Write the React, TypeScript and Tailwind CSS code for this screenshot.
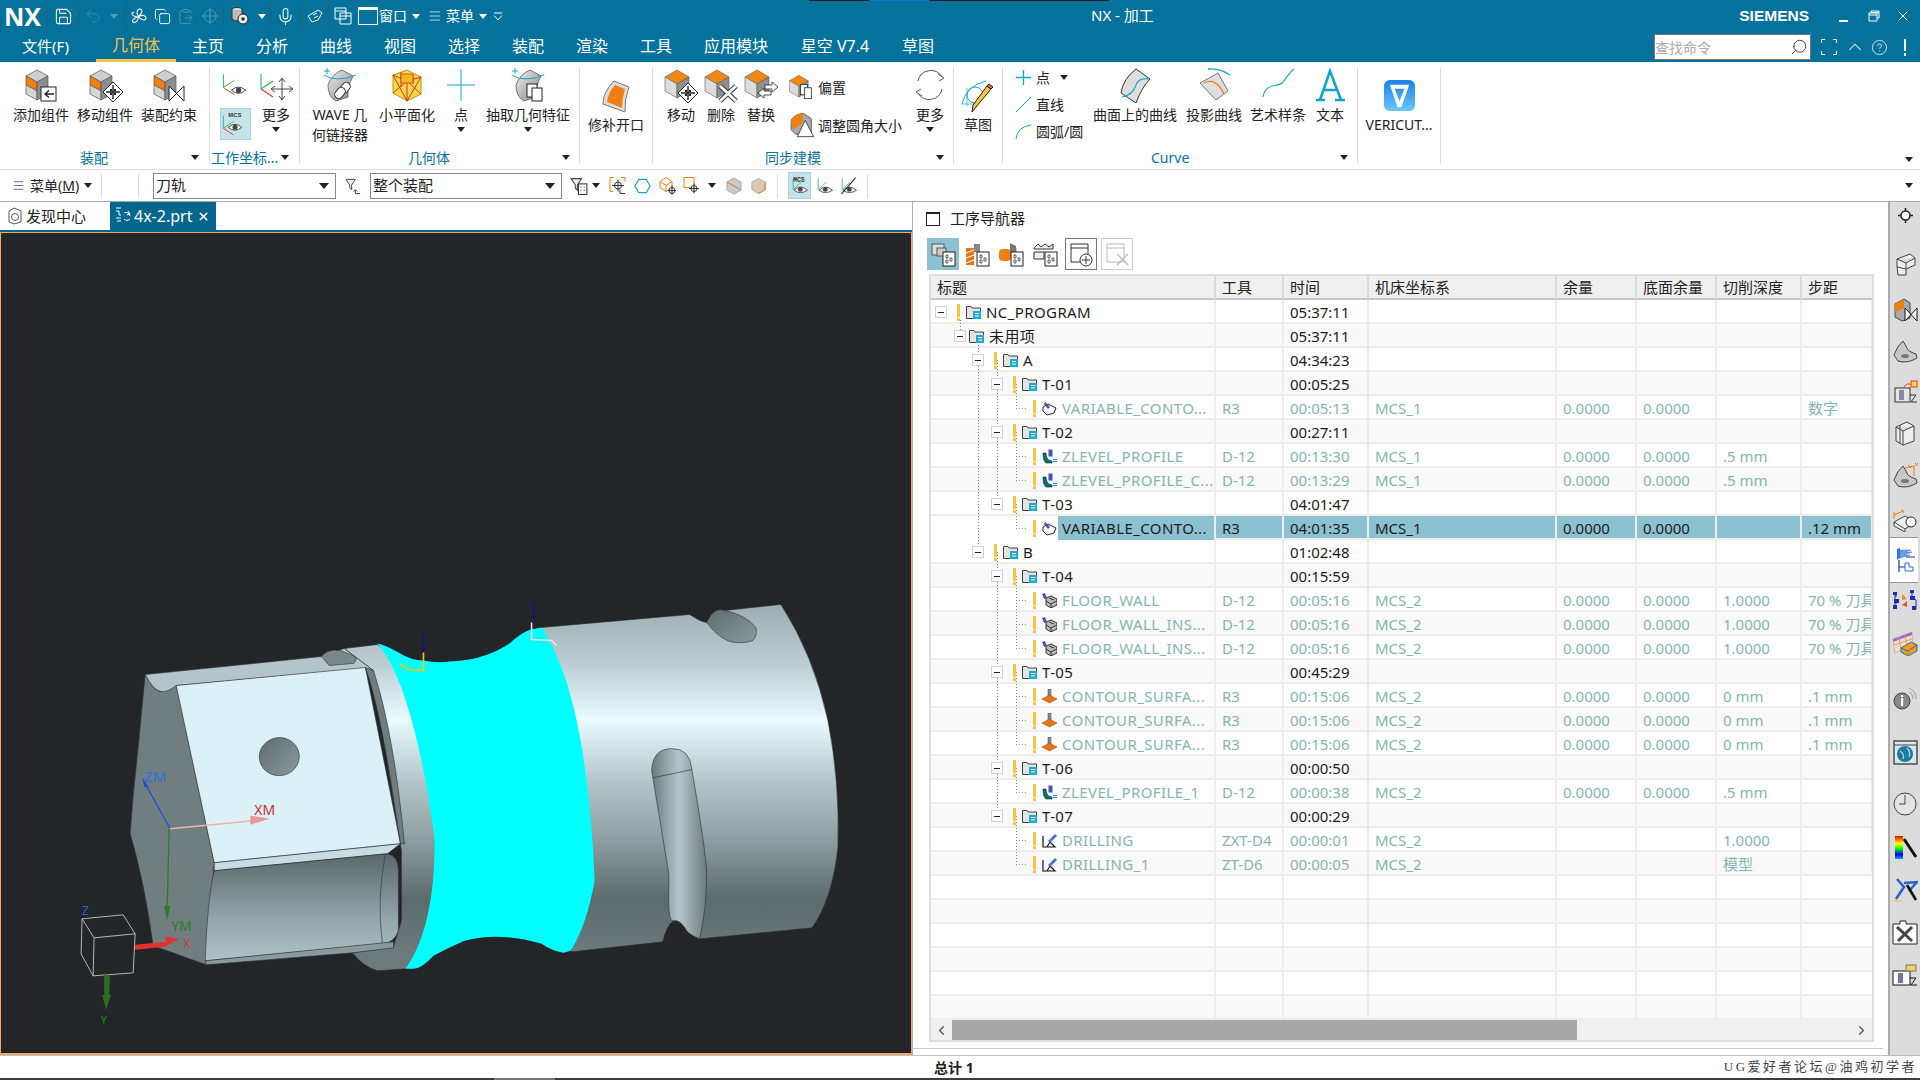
import React from "react";
import { Save, Undo2, Copy, ClipboardPaste, Mic, Menu, Search, ChevronUp, CircleHelp, ChevronLeft, ChevronRight, X } from "lucide-react";

const Caret = ({ c = "" }: { c?: string }) => (
  <span className={"inline-block w-0 h-0 border-x-[4px] border-t-[5px] border-x-transparent border-t-[#222] shrink-0 " + c} />
);
const WCaret = ({ c = "" }: { c?: string }) => (
  <span className={"inline-block w-0 h-0 border-x-[4px] border-t-[5px] border-x-transparent border-t-white shrink-0 " + c} />
);
const VSep = () => <span className="w-px h-[26px] bg-[#2b5f78] shrink-0" />;

const Ic = ({ c = "w-[36px] h-[36px]", children, vb = "0 0 36 36" }: { c?: string; children: React.ReactNode; vb?: string }) => (
  <svg viewBox={vb} className={c + " shrink-0"} fill="none">{children}</svg>
);

/* ---------- ribbon icon parts ---------- */
const TallBox = () => (
  <g stroke="#555" strokeWidth="0.7">
    <path d="M3 9 L14 3 L25 9 L14 15Z" fill="#cfcfcf" />
    <path d="M3 9 L14 15 V24 L3 18Z" fill="#f0810f" />
    <path d="M3 18 L14 24 V33 L3 27Z" fill="#d6d6d6" />
    <path d="M14 15 L25 9 V27 L14 33Z" fill="#8d8d8d" />
  </g>
);
const OrangeBox = ({ s = 1 }: { s?: number }) => (
  <g transform={`scale(${s})`} stroke="#555" strokeWidth="0.6">
    <path d="M2 10 L14 3 L26 10 L14 17Z" fill="#f28a12" />
    <path d="M2 10 L14 17 V31 L2 24Z" fill="#dcdcdc" />
    <path d="M14 17 L26 10 V24 L14 31Z" fill="#8f8f8f" />
  </g>
);
const Cross4 = ({ x = 24, y = 24, r = 10 }: { x?: number; y?: number; r?: number }) => (
  <g transform={`translate(${x} ${y})`}>
    <path d={`M0 ${-r} L${r} 0 L0 ${r} L${-r} 0Z`} fill="#fff" stroke="#222" strokeWidth="1" />
    <path d={`M0 ${-r + 3} V${r - 3} M${-r + 3} 0 H${r - 3}`} stroke="#222" strokeWidth="1.4" />
    <path d="M-3 -3h2v2h-2zM1 -3h2v2h-2zM-3 1h2v2h-2zM1 1h2v2h-2z" fill="#222" />
  </g>
);
const EyeG = ({ x, y }: { x: number; y: number }) => (
  <g transform={`translate(${x} ${y})`}>
    <path d="M-8 0 Q0 -7 8 0 Q0 7 -8 0Z" fill="#fff" stroke="#333" strokeWidth="1" />
    <circle r="3" fill="#444" />
  </g>
);
const AxisG = ({ x, y }: { x: number; y: number }) => (
  <g transform={`translate(${x} ${y})`} strokeWidth="1.1">
    <path d="M0 0 V-15" stroke="#17a9c9" />
    <path d="M0 0 L12 -8" stroke="#38b838" />
    <path d="M0 0 L12 8" stroke="#e33" />
  </g>
);

const IAdd = () => <Ic><TallBox /><rect x="18" y="20" width="15" height="14" fill="#fff" stroke="#222" /><path d="M31 27 H23 M26 23.5 L22 27 L26 30.5" stroke="#222" strokeWidth="1.3" /></Ic>;
const IMoveC = () => <Ic><TallBox /><Cross4 x={26} y={25} /></Ic>;
const IConstr = () => <Ic><TallBox /><path d="M18 19 V34 L33 19 V34Z" fill="#fff" stroke="#222" /></Ic>;
const IMoveAxis = () => <Ic><AxisG x={3} y={22} /><path d="M24 12 V32 M14 22 H34 M21 15 L24 11 L27 15 M21 29 L24 33 L27 29 M17 19 L13 22 L17 25 M31 19 L35 22 L31 25" stroke="#333" strokeWidth="0.9" /></Ic>;
const IWave = () => (
  <Ic>
    <path d="M6 18 Q10 7 20 3 L31 9 Q25 20 26 30 L14 34 Q6 30 6 18Z" fill="url(#gs)" stroke="#444" strokeWidth="0.7" />
    <path d="M2 8 Q14 16 34 8" stroke="#19a6c7" strokeWidth="1" />
    <path d="M2 4 H8 M5 1 V7" stroke="#19a6c7" />
    <rect x="19" y="15" width="8" height="12" rx="4" fill="#fff" stroke="#333" transform="rotate(40 23 21)" />
    <rect x="14" y="20" width="8" height="12" rx="4" fill="#fff" stroke="#333" transform="rotate(40 18 26)" />
  </Ic>
);
const IFacet = () => (
  <Ic>
    <path d="M4 8 L18 3 L32 10 V27 L18 34 L4 26Z" fill="#f7d74a" stroke="#b99b10" />
    <path d="M4 8 L18 14 L32 10 M18 14 V34 M4 8 L18 34 M18 14 L4 26 M18 14 L32 27 M18 34 L32 10 M12 5 L12 20 M24 7 V17" stroke="#d51f1f" strokeWidth="0.9" />
    <path d="M12 7 H24 V16 H12Z" fill="#f2b91f" stroke="#c03030" strokeWidth="0.7" />
  </Ic>
);
const IPlus = () => <Ic><path d="M18 2 V34 M4 18 H32" stroke="#18a5c5" strokeWidth="1" /></Ic>;
const IExtract = () => (
  <Ic>
    <path d="M6 18 Q10 7 20 3 L31 9 Q25 20 26 30 L14 34 Q6 30 6 18Z" fill="url(#gs)" stroke="#444" strokeWidth="0.7" />
    <path d="M2 8 Q14 16 34 8" stroke="#19a6c7" strokeWidth="1" />
    <path d="M2 4 H8 M5 1 V7" stroke="#19a6c7" />
    <rect x="17" y="17" width="10" height="13" fill="#fff" stroke="#222" />
    <rect x="22" y="21" width="10" height="13" fill="#fff" stroke="#222" />
  </Ic>
);
const IPatch = () => <Ic><path d="M5 26 Q5 14 16 3 L31 9 Q26 22 27 34Z" fill="#ddd" stroke="#777" /><path d="M9 24 Q10 15 17 7 L27 11 Q24 21 24 30Z" fill="#ef7f10" /></Ic>;
const ISMove = () => <Ic><OrangeBox /><Cross4 x={25} y={26} /></Ic>;
const ISDel = () => <Ic><OrangeBox /><path d="M17 19 L33 34 M33 19 L17 34" stroke="#333" strokeWidth="5" /><path d="M17 19 L33 34 M33 19 L17 34" stroke="#fff" strokeWidth="3" /></Ic>;
const ISRep = () => <Ic><OrangeBox /><path d="M15 26 L21 21 V24 H28 V28 H21 V31Z" fill="#fff" stroke="#222" strokeWidth="0.8" /><path d="M35 20 L29 15 V18 H22 V22 H29 V25Z" fill="#fff" stroke="#222" strokeWidth="0.8" /></Ic>;
const IOffset = () => <Ic c="w-[28px] h-[28px]"><OrangeBox /><rect x="16" y="15" width="9" height="13" fill="#fff" stroke="#222" /><rect x="21" y="19" width="9" height="14" fill="#fff" stroke="#222" /></Ic>;
const IFillet = () => <Ic c="w-[28px] h-[28px]"><path d="M4 12 Q8 4 20 3 L30 10 V28 L10 30 L4 24Z" fill="#aaa" stroke="#444" /><path d="M4 12 Q8 4 20 3 L18 16 L6 24Z" fill="#ef7f10" /><path d="M22 12 L33 33 H12Z" fill="#fff" stroke="#222" /></Ic>;
const IMore = () => <Ic><path d="M6 14 A13 13 0 0 1 30 10 M30 22 A13 13 0 0 1 6 26" stroke="#555" strokeWidth="1" /><path d="M26 7 L32 11 L27 14 M10 29 L4 25 L9 22" stroke="#555" /></Ic>;
const ISketch = () => (
  <Ic>
    <path d="M2 26 Q6 8 26 3" stroke="#19a6c7" strokeWidth="1" />
    <path d="M2 26 H16 M7 10 V28" stroke="#19a6c7" strokeWidth="0.7" />
    <circle cx="15" cy="17" r="8" stroke="#19a6c7" />
    <path d="M31 11 L16 29 L12 34 L13 27 L27 8Z" fill="#f5cb3b" stroke="#222" />
    <path d="M27 8 L31 11 L33 9 L29 6Z" fill="#e86a5f" stroke="#222" />
  </Ic>
);
const ISurfCurve = () => <Ic><path d="M4 26 Q6 12 19 2 L33 12 Q25 20 19 36Z" fill="#dedede" stroke="#333" /><path d="M5 30 Q16 28 19 18 Q22 10 32 12" stroke="#19a6c7" strokeWidth="1.1" /></Ic>;
const IProj = () => <Ic><path d="M12 2 Q24 1 34 8" stroke="#19a6c7" strokeWidth="1.3" /><path d="M4 16 L22 6 L32 24 L20 33Z" fill="#dedede" stroke="#777" /><path d="M8 16 Q20 10 28 27" stroke="#ef7f10" strokeWidth="1.3" /></Ic>;
const ISpline = () => <Ic><path d="M3 30 C5 16 18 20 22 16 C28 10 28 6 34 2" stroke="#19a6c7" strokeWidth="1.1" /></Ic>;
const IA = () => <Ic><path d="M4 33 H13 M23 33 H33 M8 33 L18 4 L29 33 M11 23 H25" stroke="#0ea6c8" strokeWidth="2.6" /></Ic>;
const IVeri = () => (
  <svg viewBox="0 0 34 34" className="w-[33px] h-[33px] shrink-0">
    <defs><linearGradient id="vg" x1="0" y1="0" x2="0" y2="1"><stop offset="0" stopColor="#1d7fe4" /><stop offset="1" stopColor="#6cc6fa" /></linearGradient></defs>
    <rect x="1" y="1" width="32" height="32" rx="6" fill="url(#vg)" />
    <path d="M7 6 H27 L19 29 H15Z M12 10 L17 23 L22 10Z" fill="#f0faff" fillRule="evenodd" />
  </svg>
);

/* ---------- ribbon scaffolding ---------- */
const Btn = ({ w, label, icon, low, caret }: { w: string; label: React.ReactNode; icon: React.ReactNode; low?: boolean; caret?: boolean }) => (
  <div className={w + " flex flex-col items-center shrink-0 text-[14px] leading-[20px] text-center text-[#222] " + (low ? "pt-[9px]" : "")}>
    <div className={"flex justify-center " + (low ? "h-[39px] items-center" : "h-[38px] items-start")}>{icon}</div>
    <div className="whitespace-nowrap">{label}</div>
    {caret && <Caret c="mt-[2px]" />}
  </div>
);
const Group = ({ w, foot, children }: { w: string; foot?: React.ReactNode; children: React.ReactNode }) => (
  <div className={w + " my-[5px] flex flex-col border-r border-[#dcdcdc] shrink-0"}>
    <div className="h-[83px] flex">{children}</div>
    <div className="h-[15px]">{foot}</div>
  </div>
);
const Foot = ({ c, t }: { c: string; t: string }) => (
  <div className={"flex items-center justify-between h-[20px] -mt-[2px] text-[14px] text-[#05729c] " + c}>
    <span className="whitespace-nowrap">{t}</span>
    <Caret />
  </div>
);

const Ribbon = () => (
  <div className="h-[108px] flex border-b border-[#dedede] bg-white shrink-0">
    <Group w="w-[210px]" foot={<Foot c="pl-[80px] pr-[10px]" t="装配" />}>
      <div className="flex pl-[9px]">
        <Btn w="w-[64px]" label="添加组件" icon={<IAdd />} />
        <Btn w="w-[64px]" label="移动组件" icon={<IMoveC />} />
        <Btn w="w-[64px]" label="装配约束" icon={<IConstr />} />
      </div>
    </Group>
    <Group w="w-[90px]" foot={<Foot c="pl-[1px] pr-[10px]" t="工作坐标..." />}>
      <div className="w-[40px] ml-[5px] flex flex-col items-center pt-[1px] gap-[8px]">
        <Ic c="w-[32px] h-[32px]"><AxisG x={5} y={22} /><EyeG x={22} y={25} /></Ic>
        <div className="w-[31px] h-[32px] bg-[#c5e3ea] border border-[#a9d3de] flex items-center justify-center">
          <Ic c="w-[30px] h-[30px]"><AxisG x={4} y={23} /><EyeG x={18} y={22} /><text x="10" y="10" fontSize="7" fontWeight="700" fill="#333" fontFamily="Liberation Sans">MCS</text></Ic>
        </div>
      </div>
      <Btn w="w-[42px]" label="更多" icon={<IMoveAxis />} caret />
    </Group>
    <Group w="w-[280px]" foot={<Foot c="pl-[108px] pr-[9px]" t="几何体" />}>
      <div className="flex pl-[4px]">
        <Btn w="w-[72px]" label={<>WAVE 几<br />何链接器</>} icon={<IWave />} />
        <Btn w="w-[62px]" label="小平面化" icon={<IFacet />} />
        <Btn w="w-[46px]" label="点" icon={<IPlus />} caret />
        <Btn w="w-[88px]" label="抽取几何特征" icon={<IExtract />} caret />
      </div>
    </Group>
    <Group w="w-[73px]">
      <div className="w-full flex justify-center"><Btn w="w-[72px]" low label="修补开口" icon={<IPatch />} /></div>
    </Group>
    <Group w="w-[301px]" foot={<Foot c="pl-[112px] pr-[9px]" t="同步建模" />}>
      <div className="flex pl-[8px]">
        <Btn w="w-[40px]" label="移动" icon={<ISMove />} />
        <Btn w="w-[40px]" label="删除" icon={<ISDel />} />
        <Btn w="w-[40px]" label="替换" icon={<ISRep />} />
        <div className="ml-[7px] w-[122px] flex flex-col pt-[1px] text-[14px] text-[#222]">
          <div className="h-[38px] flex items-center gap-[2px]"><IOffset />偏置</div>
          <div className="h-[38px] flex items-center gap-[2px] whitespace-nowrap"><IFillet />调整圆角大小</div>
        </div>
        <Btn w="w-[40px]" label="更多" icon={<IMore />} caret />
      </div>
    </Group>
    <Group w="w-[49px]">
      <div className="w-full flex justify-center"><Btn w="w-[48px]" low label="草图" icon={<ISketch />} /></div>
    </Group>
    <Group w="w-[355px]" foot={<Foot c="pl-[148px] pr-[9px]" t="Curve" />}>
      <div className="flex pl-[12px]">
        <div className="w-[72px] flex flex-col -mt-[3px] text-[14px] text-[#222] shrink-0">
          <div className="h-[27px] flex items-center gap-[4px]"><Ic c="w-[17px] h-[17px]" vb="0 0 17 17"><path d="M8.5 1 V16 M1 8.5 H16" stroke="#18a5c5" strokeWidth="1.3" /></Ic>点<Caret c="ml-[6px]" /></div>
          <div className="h-[27px] flex items-center gap-[4px]"><Ic c="w-[17px] h-[17px]" vb="0 0 17 17"><path d="M1 16 L16 1" stroke="#18a5c5" strokeWidth="1" /></Ic>直线</div>
          <div className="h-[27px] flex items-center gap-[4px] whitespace-nowrap"><Ic c="w-[17px] h-[17px]" vb="0 0 17 17"><path d="M1 16 Q2 4 16 2" stroke="#18a5c5" strokeWidth="1" /></Ic>圆弧/圆</div>
        </div>
        <Btn w="w-[96px]" label="曲面上的曲线" icon={<ISurfCurve />} />
        <Btn w="w-[62px]" label="投影曲线" icon={<IProj />} />
        <Btn w="w-[66px]" label="艺术样条" icon={<ISpline />} />
        <Btn w="w-[38px]" label="文本" icon={<IA />} />
      </div>
    </Group>
    <Group w="w-[83px]">
      <div className="w-full flex justify-center"><Btn w="w-[80px]" low label="VERICUT..." icon={<IVeri />} /></div>
    </Group>
    <div className="flex-1 flex items-end justify-end pr-[7px] pb-[7px]"><Caret /></div>
  </div>
);

/* ---------- top bars ---------- */
const TitleBar = () => (
  <div className="bg-[#05729c] text-white shrink-0">
    <div className="h-[32px] flex items-center relative">
      <div className="w-[47px] pl-[4px] text-[25px] leading-[30px] font-bold font-['Open_Sans',sans-serif]">NX</div>
      <VSep />
      <div className="w-[30px] flex justify-center"><Save size={19} strokeWidth={1.3} /></div>
      <VSep />
      <div className="w-[46px] flex items-center text-[#2f8db0] pl-[5px] gap-[8px]"><Undo2 size={18} strokeWidth={1.3} /><WCaret c="opacity-30" /></div>
      <VSep />
      <div className="w-[25px] flex justify-center">
        <Ic c="w-[19px] h-[19px]" vb="0 0 18 18"><path d="M9 9 C4 1 14 0 12 5 C11 8 9 9 9 9 C17 5 18 14 13 12 C10 11 9 9 9 9 C8 17 1 15 4 12 C6 10 9 9 9 9 C3 10 1 5 5 5" stroke="#fff" /></Ic>
      </div>
      <div className="w-[23px] flex justify-center"><Copy size={17} strokeWidth={1.3} /></div>
      <div className="w-[23px] flex justify-center text-[#4a9ab8]"><ClipboardPaste size={17} strokeWidth={1.3} /></div>
      <div className="w-[26px] flex justify-center text-[#4a9ab8]"><Ic c="w-[18px] h-[18px]" vb="0 0 18 18"><circle cx="9" cy="9" r="6" stroke="currentColor" /><path d="M9 1 V17 M1 9 H17" stroke="currentColor" /></Ic></div>
      <VSep />
      <div className="w-[46px] flex items-center pl-[6px] gap-[8px]">
        <Ic c="w-[20px] h-[20px]" vb="0 0 20 20"><ellipse cx="7" cy="4" rx="5" ry="2.5" fill="#ddd" stroke="#333" /><path d="M2 4 V13 Q7 17 12 13 V4" fill="#bbb" stroke="#333" /><circle cx="13" cy="13" r="5" fill="#eee" stroke="#222" /><circle cx="13" cy="13" r="1.8" fill="#333" /></Ic>
        <WCaret />
      </div>
      <VSep />
      <div className="w-[29px] flex justify-center"><Mic size={19} strokeWidth={1.3} /></div>
      <VSep />
      <div className="w-[27px] flex justify-center"><Ic c="w-[18px] h-[18px]" vb="0 0 18 18"><path d="M2 9 L12 3 L16 6 L12 13 L6 15Z" fill="none" stroke="#fff" /><path d="M7 8 L11 6 M8 11 L12 9" stroke="#fff" /></Ic></div>
      <VSep />
      <div className="w-[27px] flex justify-center"><Ic c="w-[18px] h-[18px]" vb="0 0 18 18"><path d="M1 1 H12 V12 H1Z M1 4 H12 M6 6 H17 V17 H6Z M6 9 H17" stroke="#fff" fill="#05729c" /></Ic></div>
      <div className="ml-[2px] w-[20px] h-[18px] border border-white border-t-[3px] shrink-0" />
      <span className="ml-[1px] pb-[1px] text-[14px] whitespace-nowrap">窗口</span>
      <WCaret c="ml-[5px]" />
      <Menu className="ml-[8px]" size={14} strokeWidth={1.2} />
      <span className="ml-[4px] pb-[1px] text-[14px] whitespace-nowrap">菜单</span>
      <WCaret c="ml-[5px]" />
      <Ic c="ml-[6px] w-[10px] h-[10px]" vb="0 0 10 10"><path d="M1 2 H9" stroke="#fff" /><path d="M1 4.5 L5 9 L9 4.5" stroke="#fff" /></Ic>
      <div className="ml-[588px] pb-[1px] text-[15px] whitespace-nowrap">NX - 加工</div>
      <div className="ml-auto flex items-center pr-[9px]">
        <span className="text-[15.5px] font-bold font-['Liberation_Sans',sans-serif] mr-[30px]">SIEMENS</span>
        <span className="w-[9px] h-[2px] bg-white mt-[9px] mr-[20px]" />
        <Ic c="w-[12px] h-[12px] mr-[15px]" vb="0 0 12 12"><path d="M3 3 V1 H11 V8 H9 M1 3 H9 V11 H1Z M1 5 H9 M3 2.5 H11" stroke="#fff" /></Ic>
        <X size={16} strokeWidth={1.5} />
      </div>
      <div className="absolute top-0 left-[809px] w-[300px] h-px bg-[#222]"><div className="ml-[60px] w-[60px] h-px bg-[#0b74d1]" /></div>
    </div>
    <div className="h-[30px] flex items-center text-[16px] pl-[4px]">
      <div className="w-[83px] pb-[2px] text-center text-[15px] whitespace-nowrap">文件(F)</div>
      <div className="ml-[9px] w-[80px] h-[30px] text-center text-[#fac14d] border-b-[3px] border-[#fac14d] leading-[27px]">几何体</div>
      {["主页", "分析", "曲线", "视图", "选择", "装配", "渲染", "工具"].map((t) => (
        <div key={t} className="w-[64px] pb-[2px] text-center">{t}</div>
      ))}
      <div className="w-[96px] pb-[2px] text-center">应用模块</div>
      <div className="w-[102px] pb-[2px] text-center whitespace-nowrap">星空 V7.4</div>
      <div className="w-[64px] pb-[2px] text-center">草图</div>
      <div className="ml-auto flex items-center">
        <div className="w-[157px] h-[26px] bg-white border border-[#777] flex items-center justify-between text-[14px] text-[#aaa] pr-[2px]">
          查找命令<Search size={18} strokeWidth={1.2} className="text-[#333] -scale-x-100" />
        </div>
        <Ic c="ml-[10px] w-[16px] h-[16px]" vb="0 0 16 16"><path d="M0.5 4 V0.5 H4 M12 0.5 H15.5 V4 M15.5 12 V15.5 H12 M4 15.5 H0.5 V12" stroke="#fff" /></Ic>
        <ChevronUp className="ml-[7px]" size={22} strokeWidth={1.1} />
        <CircleHelp className="ml-[5px]" size={17} strokeWidth={1.1} />
        <span className="ml-[16px] mr-[14px] w-[2px] h-[17px] bg-[linear-gradient(#fff_70%,transparent_70%,transparent_85%,#fff_85%)]" />
      </div>
    </div>
  </div>
);

const Sel = ({ w, t }: { w: string; t: string }) => (
  <div className={w + " h-[26px] bg-white border border-[#8a8a8a] flex items-center justify-between pl-[2px] pr-[6px] text-[15px] text-[#222] shrink-0"}>
    {t}<span className="w-0 h-0 border-x-[5px] border-t-[6px] border-x-transparent border-t-[#222]" />
  </div>
);
const EyeSm = ({ kind }: { kind: number }) => (
  <Ic c="w-[19px] h-[19px]" vb="0 0 24 24">
    <path d="M4 17 V3" stroke="#18a5c5" />
    <path d="M4 17 L14 8" stroke="#3ab53a" />
    {kind === 1 && <text x="4" y="8" fontSize="8" fontWeight="700" fill="#333" fontFamily="Liberation Mono">MCS</text>}
    <path d="M5 18 Q13 10 22 18 Q13 24 5 18Z" fill="#fff" stroke="#333" />
    <circle cx="13" cy="17" r="3" fill="#444" />
    {kind === 3 && <path d="M3 23 L21 2" stroke="#333" strokeWidth="1.4" />}
  </Ic>
);
const Toolbar = () => (
  <div className="h-[32px] flex items-center border-b border-[#a8a8a8] bg-white text-[#222] shrink-0">
    <Menu className="ml-[12px]" size={13} strokeWidth={1.2} />
    <span className="ml-[5px] text-[14px] whitespace-nowrap">菜单(<span className="underline">M</span>)</span>
    <Caret c="ml-[5px]" />
    <span className="ml-[9px] w-px h-[24px] bg-[#dcdcdc]" />
    <span className="ml-[36px] w-px h-[24px] bg-[#dcdcdc]" />
    <div className="ml-[14px]"><Sel w="w-[183px]" t="刀轨" /></div>
    <Ic c="ml-[9px] w-[17px] h-[18px]" vb="0 0 18 18"><path d="M1 2 H11 L7 8 V13 L5 11 V8Z" stroke="#444" fill="#eee" /><path d="M16 17 H11 V13 M13 15 L11 13 L9 15" stroke="#444" /></Ic>
    <div className="ml-[8px]"><Sel w="w-[192px]" t="整个装配" /></div>
    <Ic c="ml-[8px] w-[19px] h-[20px]" vb="0 0 18 18"><path d="M1 2 H11 L7 8 V13 L5 11 V8Z" stroke="#444" fill="#eee" /><rect x="8" y="7" width="8" height="10" fill="#fff" stroke="#333" /><path d="M10 10h1M13 10h1M10 13h1M13 13h1" stroke="#333" /></Ic>
    <Caret c="ml-[3px]" />
    <Ic c="ml-[9px] w-[18px] h-[19px]" vb="0 0 18 18"><path d="M5 1 H1 V15 H4 M12 1 H16 V5" stroke="#ef7f10" /><circle cx="9" cy="9" r="3.5" stroke="#333" /><path d="M9 3 V15 M3 9 H15" stroke="#333" /><path d="M16 17 H11 V13" stroke="#333" /></Ic>
    <Ic c="ml-[7px] w-[17px] h-[18px]" vb="0 0 18 18"><path d="M5 2 H13 L17 9 L13 16 H5 L1 9Z" stroke="#18a5c5" strokeWidth="1.2" /></Ic>
    <Ic c="ml-[7px] w-[18px] h-[19px]" vb="0 0 18 18"><path d="M2 5 L8 1 L14 5 V11 L8 15 L2 11Z M2 5 L8 9 L14 5 M8 9 V15" stroke="#ef7f10" /><circle cx="14" cy="14" r="3" stroke="#333" fill="#fff" /><path d="M14 9 V18 M10 14 H18" stroke="#333" /></Ic>
    <Ic c="ml-[7px] w-[18px] h-[19px]" vb="0 0 18 18"><path d="M1 1 H11 V11 H1Z" stroke="#ef7f10" /><circle cx="11" cy="12" r="3" stroke="#333" fill="#fff" /><path d="M11 7 V17 M6 12 H16" stroke="#333" /></Ic>
    <Caret c="ml-[7px]" />
    <Ic c="ml-[9px] w-[18px] h-[18px]" vb="0 0 18 18"><path d="M2 5 L9 1 L16 5 V13 L9 17 L2 13Z" fill="#c9c9c9" stroke="#aaa" /><path d="M2 5 L16 13" stroke="#e07b20" /></Ic>
    <Ic c="ml-[7px] w-[17px] h-[18px]" vb="0 0 18 18"><path d="M2 5 L9 1 L16 5 V13 L9 17 L2 13Z" fill="#d9c8b8" stroke="#aaa" /><path d="M16 5 V13 L9 17" stroke="#e07b20" /></Ic>
    <span className="ml-[10px] w-px h-[24px] bg-[#dcdcdc]" />
    <div className="ml-[10px] w-[23px] h-[27px] bg-[#c5e3ea] border border-[#a9d3de] flex items-center justify-center"><EyeSm kind={1} /></div>
    <div className="ml-[4px]"><EyeSm kind={2} /></div>
    <div className="ml-[5px]"><EyeSm kind={3} /></div>
    <span className="ml-[9px] w-px h-[24px] bg-[#dcdcdc]" />
    <Caret c="ml-auto mr-[7px]" />
  </div>
);

/* ---------- viewport model ---------- */
const Model = () => (
  <svg viewBox="0 233 909 819" className="block w-full h-full" fill="none">
    <defs>
      <linearGradient id="cyl" gradientUnits="userSpaceOnUse" x1="0" y1="610" x2="0" y2="950">
        <stop offset="0" stopColor="#a0b1b6" />
        <stop offset="0.16" stopColor="#bcced3" />
        <stop offset="0.32" stopColor="#e9fbff" />
        <stop offset="0.5" stopColor="#b4c6cb" />
        <stop offset="0.65" stopColor="#93a4a8" />
        <stop offset="0.85" stopColor="#5c6a6b" />
        <stop offset="1" stopColor="#6d7a7b" />
      </linearGradient>
      <linearGradient id="pocket" gradientUnits="userSpaceOnUse" x1="0" y1="855" x2="0" y2="960">
        <stop offset="0" stopColor="#5b696b" />
        <stop offset="0.6" stopColor="#93a6aa" />
        <stop offset="1" stopColor="#aec2c7" />
      </linearGradient>
      <linearGradient id="slot" gradientUnits="userSpaceOnUse" x1="650" y1="0" x2="705" y2="0">
        <stop offset="0" stopColor="#6c7a7c" />
        <stop offset="0.5" stopColor="#b5c6ca" />
        <stop offset="1" stopColor="#6c7a7c" />
      </linearGradient>
      <linearGradient id="hole" x1="0" y1="0" x2="1" y2="1">
        <stop offset="0" stopColor="#5f6c6e" />
        <stop offset="1" stopColor="#8b9a9d" />
      </linearGradient>
      <linearGradient id="gs" x1="0" y1="0" x2="1" y2="1"><stop offset="0" stopColor="#eee" /><stop offset="1" stopColor="#888" /></linearGradient>
    </defs>
    <g stroke="#2a3034" strokeWidth="0.6">
      {/* right cylinder */}
      <path d="M540 627 L688 614 Q700 622 705 622 Q712 606 723 610 L779 604 Q812 655 826 720 Q838 780 836 847 Q830 900 810 927 L698 938 Q690 934 685 930 Q678 918 672 920 Q665 924 661 941 L570 951 L540 880Z" fill="url(#cyl)" />
      <path d="M705 622 Q712 606 723 610 Q745 615 754 627 Q756 635 751 640 Q740 644 728 641 Q715 636 705 622Z" fill="url(#hole)" />
      {/* slot */}
      <path d="M650 770 Q651 748 670 748 Q688 748 690 768 Q704 850 705 873 Q705 905 698 938 Q688 934 685 930 Q678 918 672 920 Q667 922 667 900 V873Z" fill="url(#slot)" />
      <path d="M652 777 L690 769" stroke="#2a3034" />
      {/* left collar, running on under the cyan band */}
      <path d="M343 648 L376 644 L460 700 V940 L404 968 L376 970 Q362 966 351 952 L392 946 L400 920 V850 L372 670Z" fill="url(#cyl)" />
      {/* dark left face */}
      <path d="M144 674 Q152 690 160 691 L175 683 L213 862 L205 964 L152 945 Q143 880 129 833 Q132 790 137 747Z" fill="#707e80" />
      {/* top strip */}
      <path d="M144 674 L320 656 L343 648 L372 670 L364 668 L175 685 Q166 692 160 691 Q152 690 144 674Z" fill="#b3c5ca" />
      <path d="M320 656 Q327 648 338 650 Q352 654 355 658 Q353 664 351 663 L328 665Z" fill="#7a888a" />
      <path d="M175 685 L364 667 L399 843 L213 862Z" fill="#dcf0f7" />
      <path d="M364 667 Q380 710 399 843 L403 843 Q392 730 372 670Z" fill="#6f7d7f" />
      <path d="M213 862 L399 843 L386 853 L213 870Z" fill="#c8dce3" />
      <ellipse cx="278" cy="756" rx="20" ry="19" fill="url(#hole)" transform="rotate(-6 278 756)" />
      {/* pocket */}
      <path d="M213 870 L386 853 Q397 855 397 870 L397 930 Q393 942 381 943 L204 960 Q206 900 213 870Z" fill="url(#pocket)" />
      <path d="M381 943 Q375 900 384 853" stroke="#2a3034" />
      <path d="M205 964 L204 960 L392 941 L392 947 L351 952 L205 964Z" fill="#8a9a9d" />
    </g>
    {/* cyan band */}
    <path d="M376 643 Q385 645 397 652 Q410 660 422 660 Q436 663 448 661 Q470 660 483 655 Q498 650 509 642 Q520 632 529 629 L540 627 Q565 665 578 735 Q590 800 593 880 Q585 925 569 950 L562 952 Q550 950 540 943 Q516 936 494 936 Q478 936 463 940 Q445 948 432 955 Q420 968 412 968 L404 968 C425 940 434 890 433 837 C420 740 400 670 376 643Z" fill="#00ffff" />
    {/* tool-path marks */}
    <path d="M422 635 V652" stroke="#0000e0" strokeWidth="1.6" strokeDasharray="3 3" />
    <path d="M422 652 V670 L407 669 L398 663" stroke="#ffc000" strokeWidth="1.6" />
    <path d="M532 603 V620" stroke="#0000e0" strokeWidth="1.6" strokeDasharray="3 3" />
    <path d="M530 622 V639 L550 640 L555 645" stroke="#ffd9e4" strokeWidth="1.6" />
    {/* datum */}
    <path d="M169 828 L144 783" stroke="#1c4fd6" strokeWidth="1.2" />
    <path d="M141 776 L148 787 L143 786Z" fill="#1c4fd6" />
    <path d="M169 828 L262 819" stroke="#f0b0b0" strokeWidth="1.5" />
    <path d="M249 815 L269 818 L249 824Z" fill="#e89a9a" />
    <path d="M168 828 L166 905" stroke="#2b7a2b" strokeWidth="1.3" />
    <path d="M163 905 L169 905 L166 920Z" fill="#2b7a2b" />
    <text x="143" y="781" fontSize="15" fill="#2a6fe8" fontFamily="Noto Sans">ZM</text>
    <text x="253" y="814" fontSize="14" fill="#c83232" fontFamily="Noto Sans">XM</text>
    <text x="170" y="930" fontSize="14" fill="#2b7a2b" fontFamily="Noto Sans">YM</text>
    {/* view triad */}
    <path d="M81 918 L122 914 L134 933 L93 937 Z M81 918 L80 953 L92 975 L132 972 L134 933 M93 937 L92 975" stroke="#d8d8d8" strokeWidth="0.8" />
    <path d="M134 944 L165 941 L164 936 L178 938 L164 946 L134 949Z" fill="#e33232" />
    <path d="M103 974 H109 L108 994 L110 994 L105 1009 L101 994 L103 994Z" fill="#2b6b22" />
    <text x="182" y="947" fontSize="12" fill="#d63030" fontFamily="Noto Sans">X</text>
    <text x="100" y="1023" fontSize="10" fill="#2b8a2b" fontFamily="Noto Sans">Y</text>
    <text x="81" y="914" fontSize="12" fill="#2165d8" fontFamily="Noto Sans">Z</text>
  </svg>
);

/* ---------- table ---------- */
const Folder = () => (
  <Ic c="w-[15px] h-[14px]" vb="0 0 15 14">
    <path d="M0.5 13.5 V1.5 H5 L6 3 H14.5 V13.5Z" fill="#e4e4e4" stroke="#444" />
    <path d="M7 6 H15 V14 H7Z" fill="#1ea9d0" />
    <path d="M9 8.5 H13 M9 11 H13" stroke="#fff" />
  </Ic>
);
const OpIcon = ({ k }: { k: string }) => {
  if (k === "v") return <Ic c="w-[15px] h-[15px]" vb="0 0 15 15"><path d="M1 6 L6 3 L14 7 L12 12 L5 14 L1 10Z" fill="#fff" stroke="#222" /><path d="M3 1 L8 6 L6 8 L2 3Z" fill="#4a50a8" /></Ic>;
  if (k === "z") return <Ic c="w-[15px] h-[15px]" vb="0 0 15 15"><path d="M1 4 H4 Q4 11 10 12 V14 H4 Q1 12 1 4Z" fill="#0a6e73" stroke="#033" strokeWidth="0.6" /><rect x="6.5" y="0.5" width="4" height="7" fill="#4a50c0" /><path d="M11 10.5 H15 M11 12.5 H15" stroke="#1a7fd0" /></Ic>;
  if (k === "f") return <Ic c="w-[15px] h-[15px]" vb="0 0 15 15"><path d="M4 5 L9 3 L15 6 V12 L9 15 L4 12Z" fill="#bbb" stroke="#333" /><path d="M4 8 L9 11 L15 8 M9 11 V15 M7 5 L12 7" stroke="#333" /><path d="M0 1 L3 0 L5 5 L2 6Z" fill="#4a50c0" /></Ic>;
  if (k === "c") return <Ic c="w-[15px] h-[15px]" vb="0 0 15 15"><path d="M6 0 H9 V8 H6Z" fill="#888" stroke="#444" strokeWidth="0.5" /><path d="M0 10 L7.5 6 L15 10 L7.5 14Z" fill="#e8741a" stroke="#8a4a10" strokeWidth="0.5" /></Ic>;
  return <Ic c="w-[15px] h-[15px]" vb="0 0 15 15"><path d="M1 3 V14 H13 L8 9 L5 14" stroke="#111" strokeWidth="1.2" /><path d="M6 8 L13 1 L15 3 L8 10Z" fill="#4a70d0" /></Ic>;
};
const Exclaim = () => (
  <span className="flex flex-col items-center gap-[1px] w-[3px]">
    <span className="w-[3px] h-[13px] bg-[#fbc33e]" />
    <span className="w-[3px] h-[3px] bg-[#fbc33e]" />
  </span>
);
const Expander = () => (
  <span className="w-[12px] h-[12px] bg-white border border-[#d2d2d2] flex items-center justify-center shrink-0 z-10">
    <span className="w-[6px] h-px bg-[#222]" />
  </span>
);

type Row = { l: number; t: string; k?: string; v: string[]; time: string; sel?: boolean };
const op = (k: string, t: string, tool: string, time: string, mcs: string, a: string, b: string, d: string, s: string): Row => ({ l: 4, t, k, time, v: [tool, mcs, a, b, d, s] });
const grp = (l: number, t: string, time: string): Row => ({ l, t, time, v: ["", "", "", "", "", ""] });
const Z = "0.0000";
const rows: Row[] = [
  grp(0, "NC_PROGRAM", "05:37:11"),
  grp(1, "未用项", "05:37:11"),
  grp(2, "A", "04:34:23"),
  grp(3, "T-01", "00:05:25"),
  op("v", "VARIABLE_CONTO...", "R3", "00:05:13", "MCS_1", Z, Z, "", "数字"),
  grp(3, "T-02", "00:27:11"),
  op("z", "ZLEVEL_PROFILE", "D-12", "00:13:30", "MCS_1", Z, Z, ".5 mm", ""),
  op("z", "ZLEVEL_PROFILE_C...", "D-12", "00:13:29", "MCS_1", Z, Z, ".5 mm", ""),
  grp(3, "T-03", "04:01:47"),
  { ...op("v", "VARIABLE_CONTO...", "R3", "04:01:35", "MCS_1", Z, Z, "", ".12 mm"), sel: true },
  grp(2, "B", "01:02:48"),
  grp(3, "T-04", "00:15:59"),
  op("f", "FLOOR_WALL", "D-12", "00:05:16", "MCS_2", Z, Z, "1.0000", "70 % 刀具"),
  op("f", "FLOOR_WALL_INS...", "D-12", "00:05:16", "MCS_2", Z, Z, "1.0000", "70 % 刀具"),
  op("f", "FLOOR_WALL_INS...", "D-12", "00:05:16", "MCS_2", Z, Z, "1.0000", "70 % 刀具"),
  grp(3, "T-05", "00:45:29"),
  op("c", "CONTOUR_SURFA...", "R3", "00:15:06", "MCS_2", Z, Z, "0 mm", ".1 mm"),
  op("c", "CONTOUR_SURFA...", "R3", "00:15:06", "MCS_2", Z, Z, "0 mm", ".1 mm"),
  op("c", "CONTOUR_SURFA...", "R3", "00:15:06", "MCS_2", Z, Z, "0 mm", ".1 mm"),
  grp(3, "T-06", "00:00:50"),
  op("z", "ZLEVEL_PROFILE_1", "D-12", "00:00:38", "MCS_2", Z, Z, ".5 mm", ""),
  grp(3, "T-07", "00:00:29"),
  op("d", "DRILLING", "ZXT-D4", "00:00:01", "MCS_2", "", "", "1.0000", ""),
  op("d", "DRILLING_1", "ZT-D6", "00:00:05", "MCS_2", "", "", "模型", ""),
];
const GRID = "grid grid-cols-[285px_68px_85px_188px_80px_80px_85px_71px]";
const indent = ["pl-[4px]", "pl-[23px]", "pl-[41px]", "pl-[60px]", "pl-[92px]"];
const Cell = ({ c = "", children }: { c?: string; children?: React.ReactNode }) => (
  <div className={"h-full border-r-2 border-[#ededed] pl-[6px] whitespace-nowrap overflow-hidden leading-[24px] " + c}>{children}</div>
);
const TreeRow = ({ r, i }: { r: Row; i: number }) => {
  const sel = !!r.sel;
  const dim = r.l === 4 && !sel;
  const col = dim ? "text-[#84b5b1]" : "text-[#1c1c1c]";
  const bg = sel ? "bg-[#8cc1d1]" : i % 2 ? "bg-[#f9f9f9]" : "bg-white";
  return (
    <div className={GRID + " h-[24px] border-b-2 border-[#ededed] text-[15px] " + col + " " + bg}>
      <div className={"h-full flex items-center border-r-2 border-[#ededed] relative " + indent[r.l] + (sel ? " bg-white" : "")}>
        {r.l < 4 && <Expander />}
        {r.l === 1 ? <span className="w-[3px]" /> : (
          <span className="w-[19px] flex justify-center shrink-0 pl-[3px]"><Exclaim /></span>
        )}
        {r.l < 4 ? <Folder /> : <OpIcon k={r.k as string} />}
        <span className={"ml-[1px] pl-[4px] h-full leading-[24px] tracking-[0.4px] whitespace-nowrap flex-1 " + (sel ? "bg-[#8cc1d1]" : "")}>{r.t}</span>
      </div>
      <Cell>{r.v[0]}</Cell>
      <Cell>{r.time}</Cell>
      <Cell>{r.v[1]}</Cell>
      <Cell>{r.v[2]}</Cell>
      <Cell>{r.v[3]}</Cell>
      <Cell>{r.v[4]}</Cell>
      <Cell c="border-r-0">{r.v[5]}</Cell>
    </div>
  );
};
const Lines = () => {
  const vs: [number, number, number][] = [
    [960, 320, 330], [978, 336, 552], [997, 360, 504], [997, 552, 816],
    [1016, 384, 408], [1016, 432, 480], [1016, 504, 528], [1016, 576, 648],
    [1016, 672, 744], [1016, 768, 792], [1016, 816, 864],
  ];
  const hs = [408, 456, 480, 528, 600, 624, 648, 696, 720, 744, 792, 840, 864];
  return (
    <svg viewBox="931 300 285 576" className="absolute left-0 top-0 w-[285px] h-[576px] pointer-events-none">
      {vs.map(([x, a, b], i) => <path key={i} d={`M${x + 0.5} ${a} V${b}`} stroke="#888" strokeDasharray="1 2" />)}
      {hs.map((y, i) => <path key={i} d={`M1016 ${y + 0.5} H1026`} stroke="#888" strokeDasharray="1 2" />)}
    </svg>
  );
};
const Headers = ["标题", "工具", "时间", "机床坐标系", "余量", "底面余量", "切削深度", "步距"];

const NavBtnIcon = ({ children }: { children: React.ReactNode }) => <Ic c="w-[26px] h-[26px]" vb="0 0 26 26">{children}</Ic>;
const Tree = () => <g><rect x="13" y="11" width="12" height="14" fill="#fff" stroke="#222" /><path d="M16 14h2v3h-2zM16 19h2v3h-2zM20 17h2v3h-2z" stroke="#222" strokeWidth="0.7" /></g>;

const Navigator = () => (
  <div className="flex-1 min-w-0 flex flex-col border-l border-[#b0b0b0] bg-white">
    <div className="h-[36px] flex items-center pl-[13px] pb-[3px] shrink-0">
      <span className="w-[14px] h-[14px] border-[1.5px] border-[#222] border-t-[2px]" />
      <span className="ml-[10px] text-[15px] text-[#222]">工序导航器</span>
    </div>
    <div className="h-[36px] flex pl-[14px] shrink-0">
      <div className="w-[32px] h-[32px] bg-[#8cc1d1] flex items-center justify-center"><NavBtnIcon><rect x="2" y="3" width="12" height="11" fill="#ddd" stroke="#555" /><rect x="7" y="7" width="9" height="8" fill="#ccc" stroke="#555" /><Tree /></NavBtnIcon></div>
      <div className="ml-[2px] w-[31px] flex items-center justify-center h-[32px]"><NavBtnIcon><rect x="2" y="7" width="8" height="17" fill="#e8741a" /><path d="M2 12 L10 9 M2 17 L10 14 M2 22 L10 19" stroke="#fff" /><rect x="10" y="3" width="6" height="8" fill="#888" /><Tree /></NavBtnIcon></div>
      <div className="ml-[3px] w-[31px] flex items-center justify-center h-[32px]"><NavBtnIcon><path d="M12 2 L18 5 L19 16 L12 14Z" fill="#777" /><rect x="1" y="8" width="12" height="12" rx="4" fill="#ef7f10" /><Tree /></NavBtnIcon></div>
      <div className="ml-[3px] w-[31px] flex items-center justify-center h-[32px]"><NavBtnIcon><path d="M2 7 L6 3 L9 6 L13 3 L17 6 L21 3 V8 H2Z M2 11 H12 V18 H2Z" stroke="#333" fill="#eee" /><Tree /></NavBtnIcon></div>
      <div className="ml-[5px] w-[32px] h-[32px] border border-[#777] flex items-center justify-center"><NavBtnIcon><path d="M3 3 H20 V21 H3Z M3 7 H20" stroke="#333" fill="#fff" /><circle cx="18" cy="19" r="6" fill="#fff" stroke="#333" /><path d="M14 19 H22 M18 15 V23" stroke="#333" /></NavBtnIcon></div>
      <div className="ml-[4px] w-[32px] h-[32px] border border-[#ccc] flex items-center justify-center"><NavBtnIcon><path d="M3 3 H20 V21 H3Z M3 7 H20" stroke="#bbb" fill="#fff" /><path d="M13 13 L24 24 M24 13 L13 24" stroke="#bbb" strokeWidth="1.4" /></NavBtnIcon></div>
    </div>
    <div className="ml-[16px] w-[945px] h-[768px] border-2 border-[#dedede] flex flex-col shrink-0 overflow-hidden">
      <div className={GRID + " h-[24px] bg-[#f0f0f0] border-b-2 border-[#c8c8c8] text-[15px] text-[#222] shrink-0"}>
        {Headers.map((h, i) => (
          <div key={h} className={"pl-[6px] leading-[23px] " + (i < 7 ? "border-r-2 border-[#dadada]" : "")}>{h}</div>
        ))}
      </div>
      <div className="relative shrink-0">
        {rows.map((r, i) => <TreeRow key={i} r={r} i={i} />)}
        {Array.from({ length: 6 }).map((_, i) => (
          <div key={i} className={GRID + " h-[24px] border-b-2 border-[#ededed] " + (i % 2 ? "bg-[#f9f9f9]" : "bg-white")}>
            {[0, 1, 2, 3, 4, 5, 6, 7].map((n) => <div key={n} className={"h-full " + (n < 7 ? "border-r-2 border-[#ededed]" : "")} />)}
          </div>
        ))}
        <Lines />
      </div>
      <div className="h-[20px] bg-[#f0f0f0] flex items-center justify-between text-[#555] shrink-0">
        <ChevronLeft className="ml-[3px]" size={15} />
        <div className="flex-1 flex items-center h-[20px] pl-[3px]"><div className="w-[625px] h-[20px] bg-[#a8a8a8]" /></div>
        <ChevronRight className="mr-[3px]" size={15} />
      </div>
    </div>
    <div className="mt-auto mb-[6px] h-px bg-[#c8c8c8] mr-[5px]" />
  </div>
);

/* ---------- side bar ---------- */
const SI = ({ children }: { children: React.ReactNode }) => (
  <div className="h-[26px] flex items-center justify-center shrink-0"><Ic c="w-[26px] h-[26px]" vb="0 0 26 26">{children}</Ic></div>
);
const SideBar = () => (
  <div className="w-[32px] bg-[#dcdcdc] border-l-2 border-[#ababab] flex flex-col shrink-0">
    <div className="h-[26px] flex items-center justify-center shrink-0">
      <Ic c="w-[15px] h-[15px]" vb="0 0 15 15"><circle cx="7.5" cy="7.5" r="4.5" fill="#fff" stroke="#222" strokeWidth="1.5" /><path d="M7.5 0 V3 M7.5 12 V15 M0 7.5 H3 M12 7.5 H15" stroke="#222" strokeWidth="1.5" /></Ic>
    </div>
    <div className="h-[23px]" />
    <SI><path d="M5 8 L18 3 L23 7 V14 L14 18 V24 L6 24 L5 16Z M5 8 L14 12 L23 7 M14 12 V18 M5 16 L14 18" fill="#eee" stroke="#444" /></SI>
    <div className="h-[19px]" />
    <SI><path d="M3 8 L12 3 L18 7 V22 L10 25 L3 21Z" fill="#aaa" stroke="#444" /><path d="M3 8 L12 3 L12 12 L3 16Z" fill="#ef7f10" /><path d="M13 12 V25 L25 12 V25Z" fill="#fff" stroke="#111" /></SI>
    <div className="h-[16px]" />
    <SI><path d="M2 17 Q5 8 11 3 L15 10 Q15 13 24 16 L25 20 Q15 26 6 23 Z" fill="#c8c8c8" stroke="#444" /><ellipse cx="13" cy="18" rx="4" ry="2" fill="#777" /></SI>
    <div className="h-[15px]" />
    <SI><rect x="3" y="9" width="15" height="14" fill="#e5e5e5" stroke="#333" /><rect x="7" y="11" width="5" height="10" fill="#88a" /><path d="M12 8 Q15 3 20 6" stroke="#e33" /><rect x="19" y="2" width="6" height="6" fill="#fd3" stroke="#e33" /><path d="M18 16 L24 16 L19 23 H25" stroke="#333" /></SI>
    <div className="h-[15px]" />
    <SI><path d="M4 7 L15 2 L22 6 V21 L11 25 L4 21Z M4 7 L11 11 L22 6 M11 11 V25 M8 5 V23" fill="#eee" stroke="#444" /></SI>
    <div className="h-[17px]" />
    <SI><path d="M2 17 Q5 8 11 3 L15 10 Q15 13 24 16 L25 20 Q15 26 6 23 Z" fill="#c8c8c8" stroke="#444" /><ellipse cx="13" cy="18" rx="4" ry="2" fill="#777" /><path d="M13 5 L22 3 M22 3 V13 M16 2 L19 5 M23 0 L26 3 M26 0 L23 3" stroke="#ef7f10" /></SI>
    <div className="h-[17px]" />
    <SI><path d="M2 16 L13 10 L24 16 L13 23Z M2 16 V20 L13 26 V23" fill="#eee" stroke="#444" /><circle cx="19" cy="16" r="5" fill="#fff" stroke="#222" /><path d="M2 9 L11 5 M2 6 V13 M10 3 L12 7" stroke="#ef7f10" /></SI>
    <div className="h-[5px]" />
    <div className="h-[46px] w-[28px] bg-white border-y border-[#999] flex items-center justify-center shrink-0">
      <Ic c="w-[24px] h-[28px]" vb="0 0 24 28">
        <path d="M5 3 L8 2 V12 L5 14Z" fill="#3a78d8" /><path d="M8 4 H19 L13 6 H20 L12 9 H18 L8 12Z" fill="#6aa0e8" stroke="#3a78d8" strokeWidth="0.5" />
        <path d="M7 14 V26 M7 21 H13 M14 11 H23" stroke="#1a2fb0" strokeWidth="1.2" /><path d="M13 17 H17 V21 H21 V25 H13Z" stroke="#2a6fd8" fill="none" />
      </Ic>
    </div>
    <div className="h-[4px]" />
    <SI>
      <path d="M3 5 V22 M3 9 H5 M3 16 H5" stroke="#1a2fb0" /><rect x="1" y="5" width="4" height="3" fill="#1a2fb0" /><rect x="2" y="12" width="5" height="4" fill="#1a2fb0" /><rect x="1" y="18" width="4" height="4" fill="#1a2fb0" />
      <path d="M20 3 V10 L24 13 V22 M20 22 H24" stroke="#1a2fb0" /><rect x="18" y="3" width="4" height="3" fill="#1a2fb0" /><rect x="18" y="9" width="5" height="4" fill="#1a2fb0" /><rect x="20" y="19" width="4" height="4" fill="#1a2fb0" />
      <path d="M10 7 L15 12 L10 13Z" fill="#f08a24" /><path d="M15 14 L10 18 L15 20Z" fill="#e5562a" />
    </SI>
    <div className="h-[17px]" />
    <SI>
      <path d="M1 9 L20 2 L21 14 L3 23Z" fill="#f3dfc9" stroke="#b0a090" strokeWidth="0.6" />
      <path d="M1 9 L20 2 L20 5 L1 12Z" fill="#9a6fd0" /><path d="M7 7 L9 20 M13 5 L15 17 M2 15 L20 9" stroke="#e0a060" />
      <path d="M9 18 L19 12 L25 15 V21 L16 26 L9 22Z" fill="#f59a1b" stroke="#1a70c0" /><path d="M9 18 L16 21 L25 15" stroke="#1a70c0" />
    </SI>
    <div className="h-[29px]" />
    <SI>
      <path d="M17 3 Q24 6 24 14 M17 7 Q21 9 21 14" stroke="#aaa" strokeWidth="1.2" />
      <circle cx="10" cy="16" r="8" fill="#888" stroke="#444" /><rect x="9" y="13" width="2.2" height="8" fill="#fff" /><rect x="9" y="10" width="2.2" height="2" fill="#fff" />
    </SI>
    <div className="h-[28px]" />
    <SI><rect x="2" y="2" width="23" height="23" fill="#d8e8ee" stroke="#444" strokeWidth="1.4" /><path d="M2 6 H25" stroke="#444" /><circle cx="13" cy="15" r="8" fill="#1c7b9e" /><path d="M8 12 Q13 15 11 20 M15 9 Q19 13 17 18" stroke="#a8d5e2" strokeWidth="1.3" /></SI>
    <div className="h-[26px]" />
    <SI><circle cx="13" cy="13" r="11" stroke="#444" fill="#e4e4e4" /><path d="M13 4 V13 H7" stroke="#444" /></SI>
    <div className="h-[18px]" />
    <SI>
      <defs><linearGradient id="rb" x1="0" y1="0" x2="0" y2="1"><stop offset="0" stopColor="#f00" /><stop offset="0.33" stopColor="#ff0" /><stop offset="0.55" stopColor="#0f0" /><stop offset="0.8" stopColor="#00f" /><stop offset="1" stopColor="#0af" /></linearGradient></defs>
      <rect x="3" y="1" width="8" height="23" fill="url(#rb)" /><path d="M12 4 L24 22" stroke="#111" strokeWidth="3" />
    </SI>
    <div className="h-[16px]" />
    <SI><path d="M5 2 L12 10 L4 22 M12 6 L25 5 L17 14" stroke="#2a5fd0" strokeWidth="2.5" /><path d="M15 8 L24 23" stroke="#111" strokeWidth="2.6" /><path d="M2 24 H10" stroke="#e9c400" /></SI>
    <div className="h-[16px]" />
    <SI><path d="M1 5 H8 V2 H14 V5 H25 V25 H1Z" fill="#fff" stroke="#222" /><path d="M5 8 L20 22 M20 8 L6 22" stroke="#444" strokeWidth="3" /></SI>
    <div className="h-[17px]" />
    <SI><rect x="1" y="9" width="17" height="14" fill="#fff" stroke="#111" /><rect x="6" y="11" width="5" height="10" fill="#7a6fa0" /><path d="M18 16 H24 L19 23 H25" stroke="#111" /><path d="M14 3 H24 V9 H14Z" fill="#f4d25a" stroke="#777" /></SI>
  </div>
);

export default function App() {
  return (
    <div className="w-[1920px] h-[1080px] overflow-hidden flex flex-col bg-white font-['Noto_Sans','Noto_Sans_CJK_SC',sans-serif]">
      <TitleBar />
      <Ribbon />
      <Toolbar />
      <div className="h-[853px] flex shrink-0">
        <div className="w-[912px] flex flex-col shrink-0">
          <div className="h-[28px] flex items-center shrink-0 bg-white">
            <Ic c="ml-[6px] w-[18px] h-[18px]" vb="0 0 18 18"><path d="M3 4 L8 1 L15 4 V15 L8 17 L3 15Z" stroke="#555" /><circle cx="9" cy="10" r="3.5" stroke="#555" /></Ic>
            <span className="ml-[2px] w-[84px] text-[15px] text-[#222] whitespace-nowrap">发现中心</span>
            <div className="w-[106px] h-[28px] bg-[#05668d] text-white flex items-center pl-[5px] text-[16px]">
              <Ic c="w-[16px] h-[18px]" vb="0 0 16 18"><path d="M1 1 H6 M1 4 H4 V8 H6 M1 11 H6 M2 14 H6 M9 6 A4 4 0 0 1 15 9 M15 12 A4 4 0 0 1 9 12 M13 4 L15 7 L12 8" stroke="#fff" /></Ic>
              <span className="ml-[3px] whitespace-nowrap">4x-2.prt</span>
              <X className="ml-[5px]" size={13} strokeWidth={3} />
            </div>
          </div>
          <div className="h-[2px] bg-[#05668d] shrink-0" />
          <div className="flex-1 min-h-0 border border-[#f0a86a] border-b-2 bg-[#232529]">
            <Model />
          </div>
        </div>
        <Navigator />
        <SideBar />
      </div>
      <div className="h-[23px] flex items-center border-t border-[#c0c0c0] bg-white shrink-0">
        <span className="ml-[934px] text-[14px] font-bold text-[#222]">总计 1</span>
        <span className="ml-auto mr-[3px] text-[13px] tracking-[2.5px] text-[#444] font-['Liberation_Serif','Noto_Sans_CJK_SC',serif] whitespace-nowrap">UG爱好者论坛@油鸡初学者</span>
      </div>
      <div className="h-[2px] bg-[#3a3d40] flex shrink-0"><div className="ml-[494px] w-[61px] bg-[#777]" /></div>
    </div>
  );
}
